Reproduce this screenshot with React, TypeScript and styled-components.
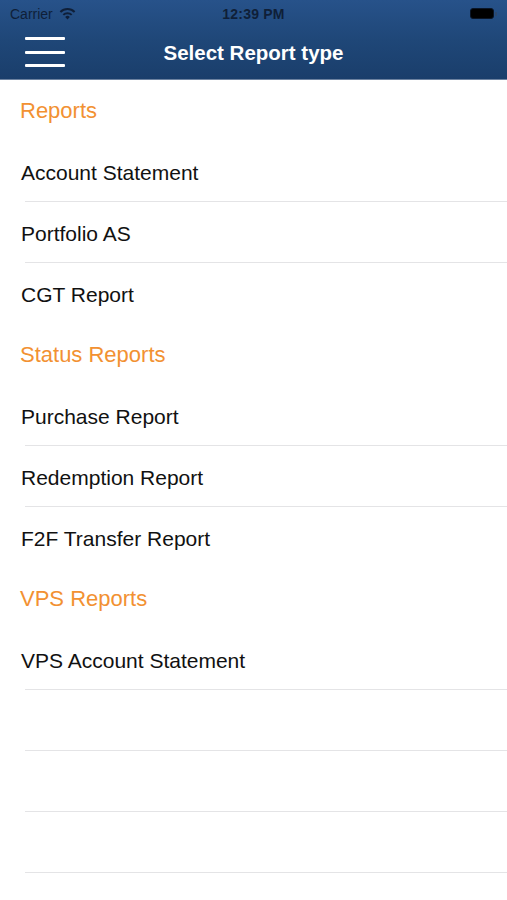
import React from "react";
import styled, { createGlobalStyle } from "styled-components";

const GlobalStyle = createGlobalStyle`
  html, body {
    margin: 0;
    padding: 0;
    background: #ffffff;
  }
  body {
    font-family: "Liberation Sans", Arial, sans-serif;
    -webkit-font-smoothing: antialiased;
  }
`;

const Screen = styled.div`
  width: 507px;
  height: 900px;
  overflow: hidden;
  background: #ffffff;
`;

const TopBar = styled.header`
  background: linear-gradient(180deg, #27528a 0%, #1f4778 50%, #1a3e6b 100%);
  border-bottom: 1px solid #6c82a0;
`;

const StatusBar = styled.div`
  height: 27px;
  display: grid;
  grid-template-columns: 1fr auto 1fr;
  align-items: center;
  padding: 0 10px;
  color: #0f1f38;
  font-size: 14px;
`;

const Carrier = styled.div`
  display: flex;
  align-items: center;
  gap: 6px;
`;

const Clock = styled.div`
  font-weight: 700;
  letter-spacing: 0.2px;
`;

const Battery = styled.div`
  justify-self: end;
  display: flex;
  align-items: center;
`;

const BatteryBody = styled.div`
  width: 22px;
  height: 9px;
  border-radius: 3px;
  background: #000000;
  border: 1px solid #0a1526;
`;

const BatteryNub = styled.div`
  width: 2px;
  height: 4px;
  margin-left: 1px;
  border-radius: 0 1px 1px 0;
  background: #2f4a6e;
`;

const NavBar = styled.div`
  height: 52px;
  position: relative;
  display: flex;
  align-items: center;
  justify-content: center;
`;

const MenuButton = styled.button`
  position: absolute;
  left: 25px;
  top: 10px;
  width: 40px;
  height: 30px;
  padding: 0;
  border: 0;
  background: none;
  display: flex;
  flex-direction: column;
  justify-content: space-between;
`;

const MenuLine = styled.span`
  display: block;
  height: 3px;
  width: 40px;
  border-radius: 1px;
  background: #ffffff;
`;

const Title = styled.h1`
  margin: 0;
  color: #ffffff;
  font-size: 20.5px;
  font-weight: 700;
`;

const List = styled.div`
  display: flex;
  flex-direction: column;
`;

const SectionTitle = styled.div`
  height: 61px;
  display: flex;
  align-items: center;
  padding-left: 20px;
  color: #f29132;
  font-size: 22px;
`;

const Row = styled.div<{ $divider: boolean }>`
  height: 61px;
  flex-shrink: 0;
  position: relative;
  display: flex;
  align-items: center;
  padding: 3px 0 0 21px;
  box-sizing: border-box;
  color: #111111;
  font-size: 21px;

  &::after {
    content: "";
    display: ${(p) => (p.$divider ? "block" : "none")};
    position: absolute;
    left: 25px;
    right: 0;
    bottom: 0;
    height: 1px;
    background: #e4e4e6;
  }
`;

const sections = [
  { title: "Reports", items: ["Account Statement", "Portfolio AS", "CGT Report"] },
  { title: "Status Reports", items: ["Purchase Report", "Redemption Report", "F2F Transfer Report"] },
];

const WifiIcon = () => (
  <svg width="17" height="12" viewBox="0 0 17 12">
    <path d="M8.5 11.5 L6.2 8.9 A3.4 3.4 0 0 1 10.8 8.9 Z" fill="#0f1f38" />
    <path d="M4.3 6.9 A6 6 0 0 1 12.7 6.9" stroke="#0f1f38" strokeWidth="2" fill="none" />
    <path d="M1.4 4 A10 10 0 0 1 15.6 4" stroke="#0f1f38" strokeWidth="2" fill="none" />
  </svg>
);

export default function App() {
  return (
    <Screen>
      <GlobalStyle />
      <TopBar>
        <StatusBar>
          <Carrier>
            Carrier
            <WifiIcon />
          </Carrier>
          <Clock>12:39 PM</Clock>
          <Battery>
            <BatteryBody />
            <BatteryNub />
          </Battery>
        </StatusBar>
        <NavBar>
          <MenuButton aria-label="Menu">
            <MenuLine />
            <MenuLine />
            <MenuLine />
          </MenuButton>
          <Title>Select Report type</Title>
        </NavBar>
      </TopBar>
      <List>
        {sections.map((s) => (
          <React.Fragment key={s.title}>
            <SectionTitle>{s.title}</SectionTitle>
            {s.items.map((item, i) => (
              <Row key={item} $divider={i < s.items.length - 1}>
                {item}
              </Row>
            ))}
          </React.Fragment>
        ))}
        <SectionTitle>VPS Reports</SectionTitle>
        <Row $divider>VPS Account Statement</Row>
        <Row $divider />
        <Row $divider />
        <Row $divider />
        <Row $divider={false} />
      </List>
    </Screen>
  );
}
